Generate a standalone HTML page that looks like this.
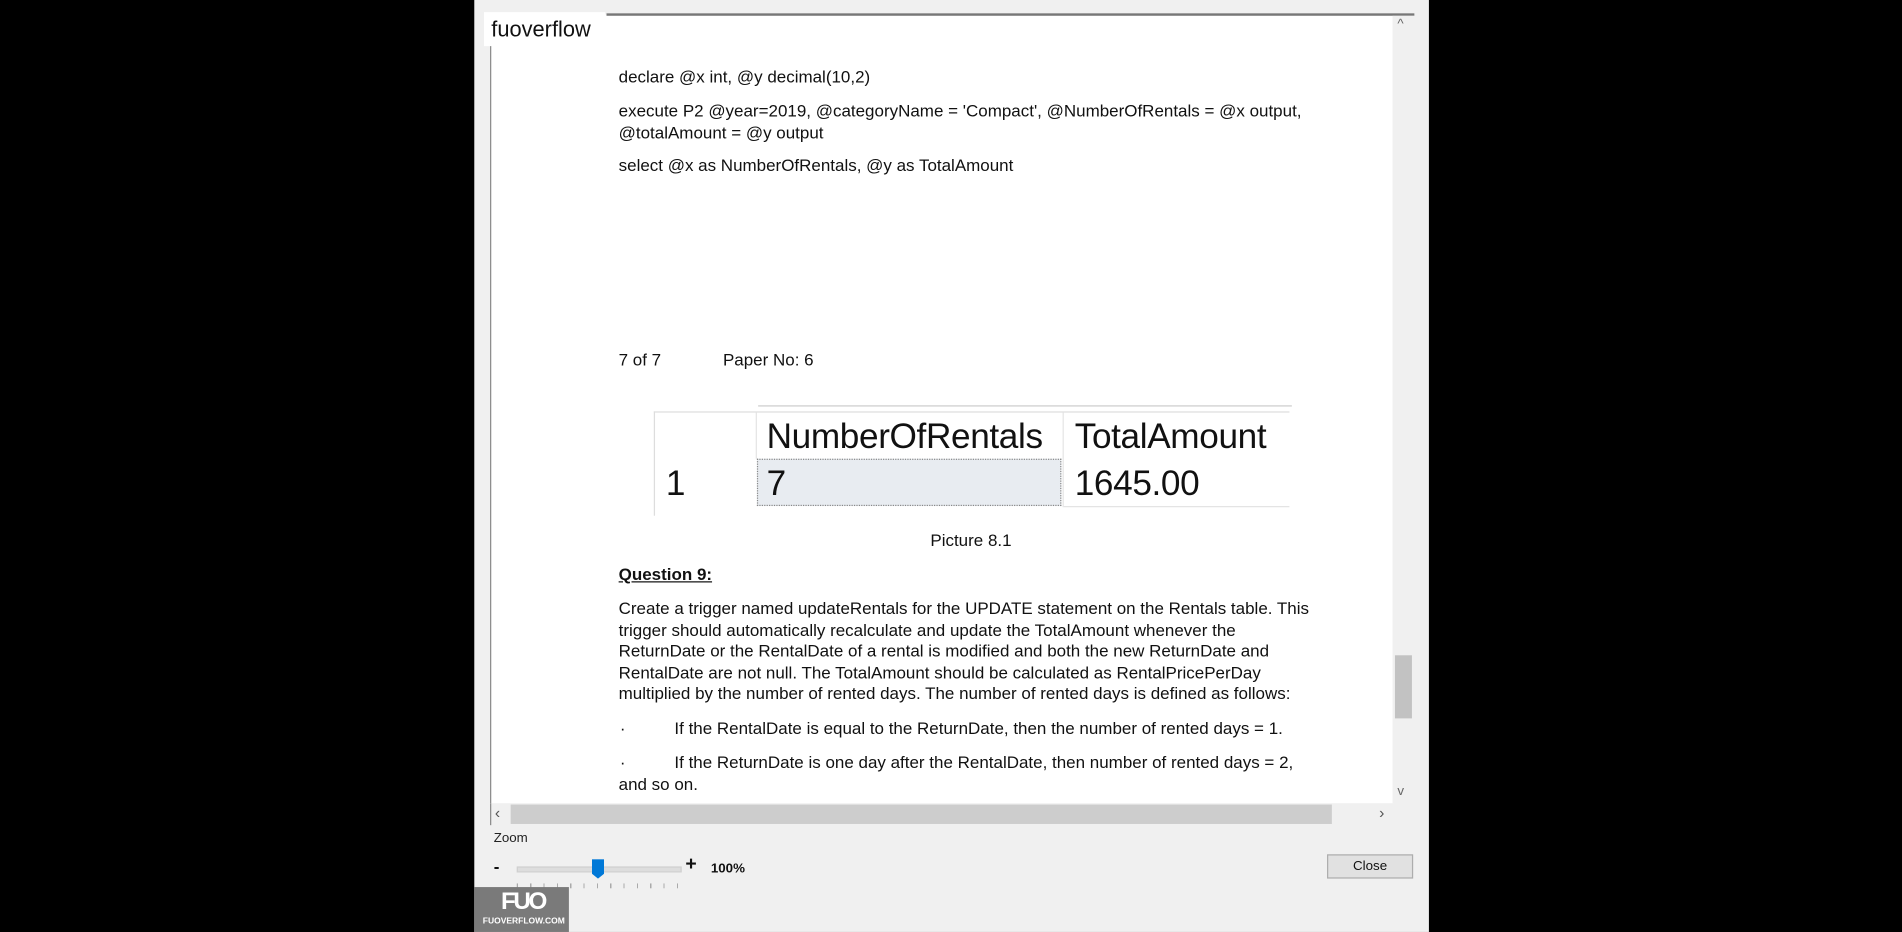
<!DOCTYPE html>
<html><head><meta charset="utf-8"><style>
html,body{margin:0;padding:0;background:#000;width:1902px;height:932px;overflow:hidden}
#w{position:absolute;left:0;top:0;width:1568px;height:768px;transform:scale(1.2130,1.2135);transform-origin:0 0;font-family:"Liberation Sans",Arial,sans-serif;color:#111}
.a{position:absolute;white-space:nowrap}
.t{font-size:14px;line-height:17.6px}
.b{font-size:29px;line-height:36px;letter-spacing:-0.3px}
</style></head><body><div id="w">
<div class="a" style="left:391px;top:0;width:787px;height:768px;background:#f0f0f0"></div>
<div class="a" style="left:404px;top:12px;width:744px;height:650px;background:#fff;border-left:1px solid #888"></div>
<div class="a" style="left:500px;top:11px;width:666px;height:2px;background:#777"></div>
<div class="a" style="left:1148px;top:13px;width:18px;height:649px;background:#f0f0f0"></div>
<div class="a" style="left:1150px;top:540px;width:14px;height:52px;background:#c2c2c2"></div>
<div class="a" style="left:1152px;top:14px;font-size:11px;color:#666">^</div>
<div class="a" style="left:1152px;top:646px;font-size:11px;color:#666">v</div>
<div class="a" style="left:404px;top:662px;width:762px;height:18px;background:#f0f0f0;border-left:1px solid #888"></div>
<div class="a" style="left:421px;top:663px;width:677px;height:16px;background:#cdcdcd"></div>
<div class="a" style="left:408px;top:662px;font-size:13px;color:#555">‹</div>
<div class="a" style="left:1137px;top:662px;font-size:13px;color:#555">›</div>
<div class="a" style="left:399px;top:10px;width:100px;height:28px;background:#fff"></div>
<div class="a" style="left:405px;top:14px;font-size:18px">fuoverflow</div>

<div class="a t" style="left:510px;top:55px">declare @x int, @y decimal(10,2)</div>
<div class="a t" style="left:510px;top:83px">execute P2 @year=2019, @categoryName = 'Compact', @NumberOfRentals = @x output,<br>@totalAmount = @y output</div>
<div class="a t" style="left:510px;top:128px">select @x as NumberOfRentals, @y as TotalAmount</div>
<div class="a t" style="left:510px;top:288px">7 of 7</div>
<div class="a t" style="left:596px;top:288px">Paper No: 6</div>

<div class="a" style="left:625px;top:334px;width:440px;height:1px;background:#ccc"></div>
<div class="a" style="left:539px;top:339px;width:524px;height:1px;background:#ddd"></div>
<div class="a" style="left:539px;top:339px;width:1px;height:86px;background:#ddd"></div>
<div class="a" style="left:623px;top:340px;width:1px;height:38px;background:#e4e4e4"></div>
<div class="a" style="left:876px;top:340px;width:1px;height:78px;background:#e4e4e4"></div>
<div class="a" style="left:624px;top:378px;width:251px;height:39px;background:#e8ecf1;border:1px dotted #888;box-sizing:border-box"></div>
<div class="a" style="left:877px;top:417px;width:186px;height:1px;background:#e4e4e4"></div>
<div class="a b" style="left:632px;top:342px">NumberOfRentals</div>
<div class="a b" style="left:886px;top:342px">TotalAmount</div>
<div class="a b" style="left:549px;top:381px">1</div>
<div class="a b" style="left:632px;top:381px">7</div>
<div class="a b" style="left:886px;top:381px">1645.00</div>
<div class="a t" style="left:767px;top:437px">Picture 8.1</div>
<div class="a t" style="left:510px;top:465px;font-weight:bold;text-decoration:underline">Question 9:</div>
<div class="a t" style="left:510px;top:493px">Create a trigger named updateRentals for the UPDATE statement on the Rentals table. This<br>trigger should automatically recalculate and update the TotalAmount whenever the<br>ReturnDate or the RentalDate of a rental is modified and both the new ReturnDate and<br>RentalDate are not null. The TotalAmount should be calculated as RentalPricePerDay<br>multiplied by the number of rented days. The number of rented days is defined as follows:</div>
<div class="a t" style="left:511px;top:592px">·</div>
<div class="a t" style="left:556px;top:592px">If the RentalDate is equal to the ReturnDate, then the number of rented days = 1.</div>
<div class="a t" style="left:511px;top:620px">·</div>
<div class="a t" style="left:556px;top:620px">If the ReturnDate is one day after the RentalDate, then number of rented days = 2,</div>
<div class="a t" style="left:510px;top:638px">and so on.</div>

<div class="a" style="left:407px;top:685px;font-size:11px;color:#222">Zoom</div>
<div class="a" style="left:407px;top:706px;font-size:14px;font-weight:bold">-</div>
<div class="a" style="left:426px;top:714px;width:134px;height:3px;background:#ddd;border:1px solid #d0d0d0"></div>
<div class="a" style="left:488px;top:708px;width:10px;height:16px;background:#0078d7;clip-path:polygon(0 0,100% 0,100% 75%,50% 100%,0 75%)"></div>
<div class="a" style="left:426px;top:728px;width:134px;height:4px;background:repeating-linear-gradient(90deg,#aaa 0 1px,transparent 1px 11px)"></div>
<div class="a" style="left:565px;top:704px;font-size:16px;font-weight:bold">+</div>
<div class="a" style="left:586px;top:710px;font-size:11px;font-weight:bold">100%</div>
<div class="a" style="left:1094px;top:704px;width:71px;height:20px;background:#e1e1e1;border:1px solid #adadad;box-sizing:border-box;font-size:11px;text-align:center;line-height:18px">Close</div>
<div class="a" style="left:391px;top:731px;width:78px;height:37px;background:#7a7a7a"></div>
<div class="a" style="left:413px;top:732px;font-size:20px;font-weight:bold;color:#fff;letter-spacing:-2px">FUO</div>
<div class="a" style="left:398px;top:756px;font-size:7px;font-weight:bold;color:#fff">FUOVERFLOW.COM</div>
</div></body></html>
